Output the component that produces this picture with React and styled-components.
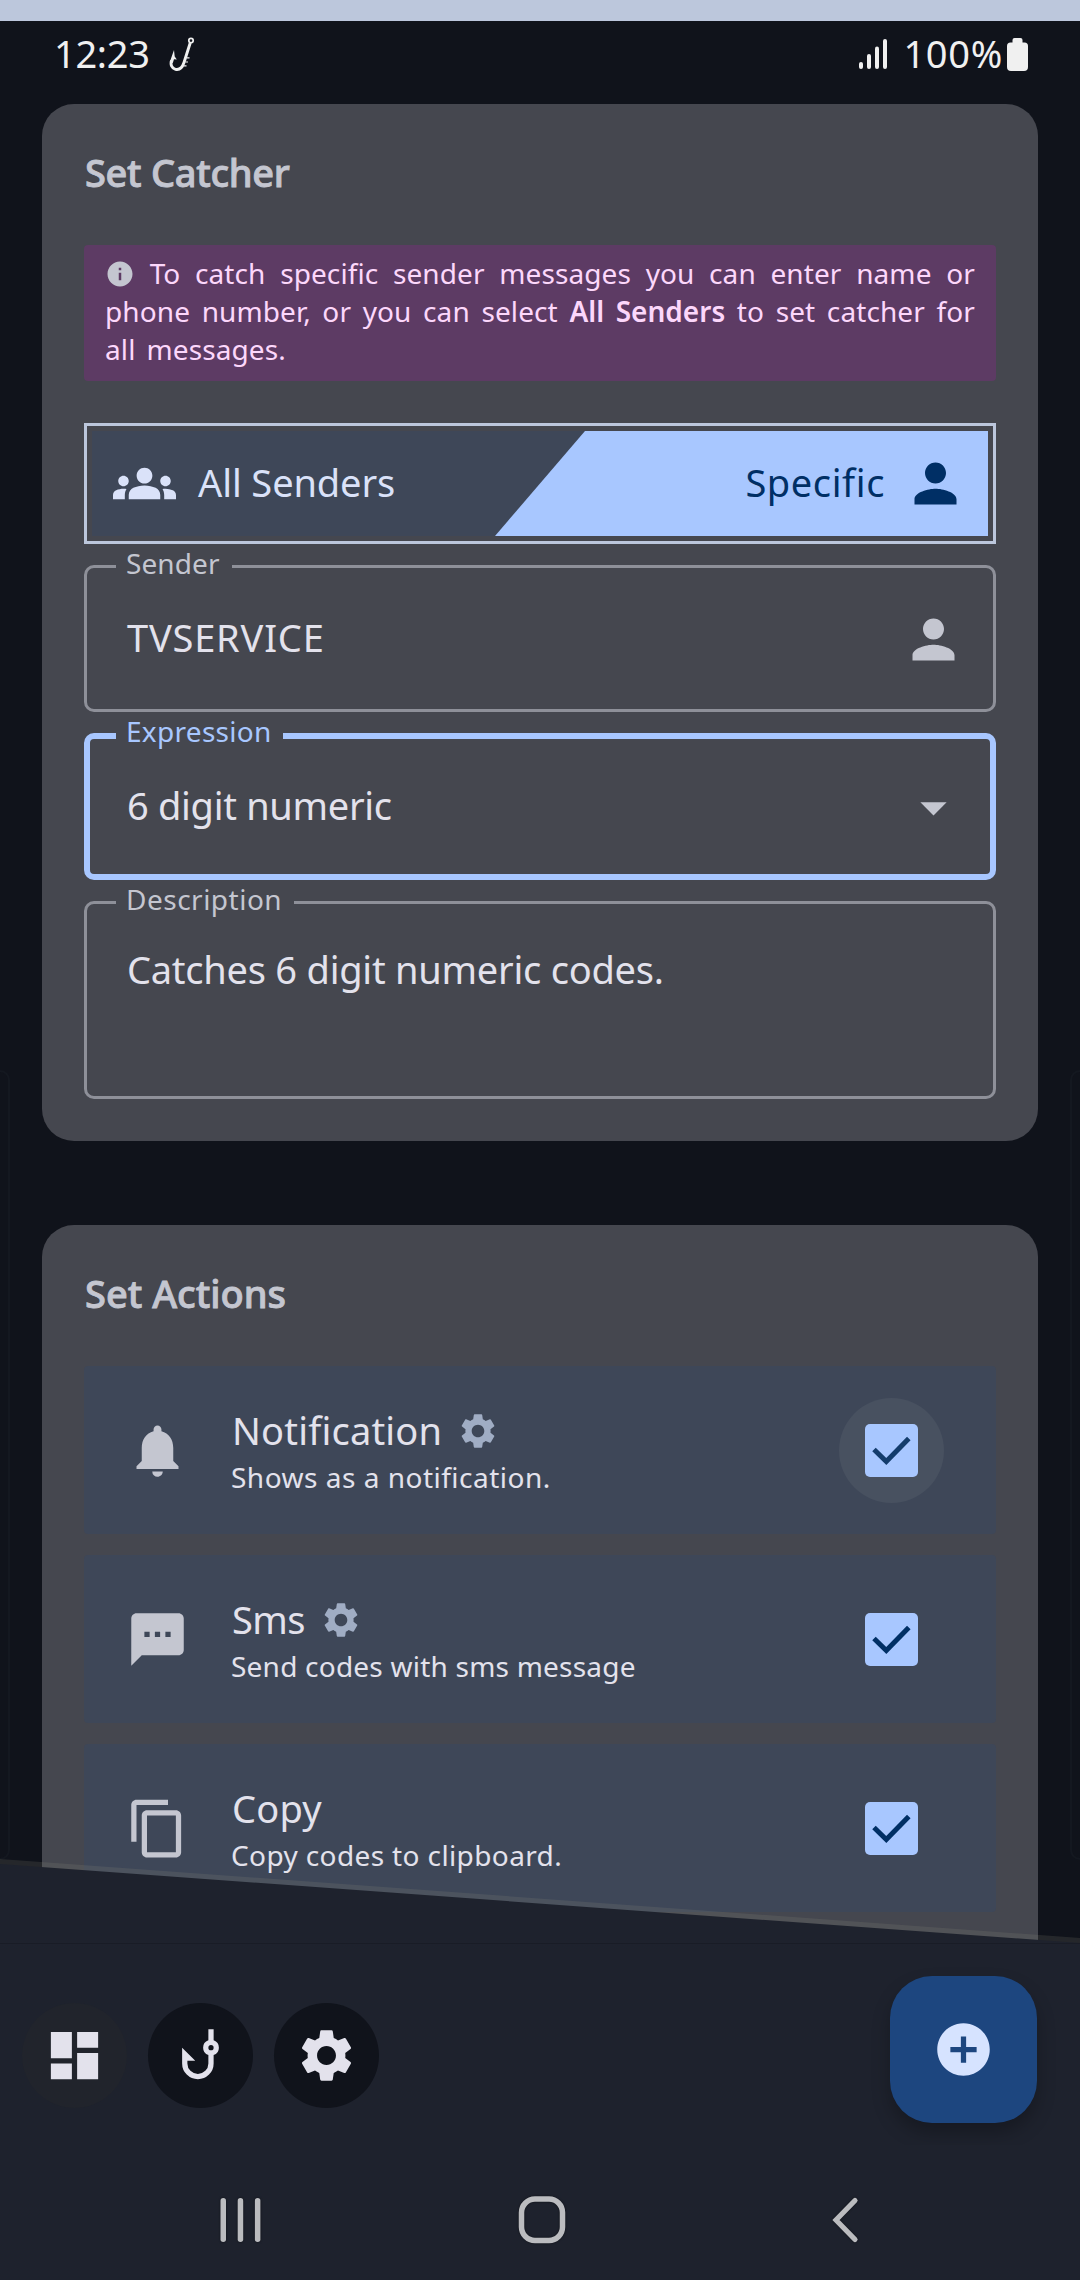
import React from "react";
import styled, { createGlobalStyle, css } from "styled-components";
import {
  MdAddCircle,
  MdArrowDropDown,
  MdContentCopy,
  MdDashboard,
  MdGroups,
  MdInfo,
  MdNotifications,
  MdPerson,
  MdSettings,
  MdSms,
} from "react-icons/md";

const GlobalStyle = createGlobalStyle`
  * { box-sizing: border-box; }
  body {
    margin: 0;
    background: #10131b;
    font-family: "Noto Sans", "Open Sans", sans-serif;
  }
  svg { display: block; flex: none; }
`;

const Screen = styled.div`
  position: relative;
  width: 1080px;
  height: 2280px;
  overflow: hidden;
  background: #10131b;
  display: flex;
  flex-direction: column;
`;

const TopStrip = styled.div`
  height: 21px;
  flex: none;
  background: #bcc7dc;
`;

const StatusBar = styled.header`
  height: 83px;
  flex: none;
  display: flex;
  justify-content: space-between;
  align-items: flex-start;
  padding: 7px 52px 0 54px;
  color: #f0f0f0;
`;

const StatusGroup = styled.div`
  display: flex;
  align-items: center;
  height: 52px;
`;

const StatusText = styled.span`
  font-size: 38px;
  line-height: 52px;
  white-space: nowrap;
  letter-spacing: ${(p) => p.$ls || 0}px;
  margin: -3px ${(p) => p.$mr || 0}px 0 ${(p) => p.$ml || 0}px;
`;

const Content = styled.main`
  flex: 1;
  min-height: 0;
  padding: 0 42px;
  display: flex;
  flex-direction: column;
  gap: 84px;
`;

const Card = styled.section`
  flex: none;
  height: ${(p) => p.$h}px;
  background: #45474f;
  border-radius: 32px;
  padding: 41px 42px 42px;
`;

const CardTitle = styled.h2`
  margin: 0 0 46px;
  padding-left: 1px;
  font-size: 38px;
  line-height: 54px;
  font-weight: 500;
  -webkit-text-stroke: 0.9px currentColor;
  letter-spacing: ${(p) => p.$ls}px;
  color: #c4c6d0;
  white-space: nowrap;
`;

const InfoBox = styled.div`
  height: 136px;
  padding: 9px 21px 0 21px;
  border-radius: 4px;
  background: #5d3b64;
  color: #fcd7fb;
  font-size: 28px;
  line-height: 38px;
  margin-bottom: 42px;
`;

const InfoLine = styled.div`
  display: flex;
  justify-content: ${(p) => (p.$start ? "flex-start" : "space-between")};
  gap: ${(p) => (p.$start ? "11px" : "0")};
  letter-spacing: 0.1px;
  white-space: nowrap;
  b { font-weight: 600; letter-spacing: 0; }
`;

const InfoIcon = styled(MdInfo)`
  width: 30px;
  height: 30px;
  margin-top: 5px;
  color: #c4c6d0;
`;

const Toggle = styled.div`
  height: 121px;
  border: 3px solid #bcc7dc;
  padding: 5px;
  display: grid;
  margin-bottom: 21px;
`;

const ToggleTrack = styled.div`
  display: flex;
  justify-content: space-between;
  align-items: center;
  padding: 0 21px;
  background: #3e4758;
  position: relative;
`;

const ToggleActive = styled.div`
  position: absolute;
  inset: 0 0 0 403px;
  background: #a8c7ff;
  clip-path: polygon(90px 0, 100% 0, 100% 100%, 0 100%);
`;

const ToggleOption = styled.div`
  position: relative;
  display: flex;
  align-items: center;
  gap: ${(p) => (p.$on ? 19 : 22)}px;
  font-size: 38px;
  line-height: 52px;
  letter-spacing: ${(p) => p.$ls}px;
  color: ${(p) => (p.$on ? "#002f65" : "#dae2f9")};
  white-space: nowrap;
  span { margin-top: -4px; }
`;

const Field = styled.fieldset`
  position: relative;
  min-width: 0;
  margin: 0 0 21px;
  height: ${(p) => p.$h}px;
  padding: 0;
  display: flex;
  justify-content: space-between;
  align-items: ${(p) => (p.$top ? "flex-start" : "center")};
  border-radius: 10px;
  --edge: ${(p) => (p.$active ? "#a8c7ff" : "#8e9099")};
  --w: ${(p) => (p.$active ? 6 : 3)}px;
  border: var(--w) solid var(--edge);
`;

const FieldLabel = styled.span`
  position: absolute;
  left: calc(32px - var(--w));
  top: calc(-22px - var(--w));
  width: ${(p) => p.$w}px;
  padding-left: 10px;
  background: linear-gradient(#45474f, #45474f) 0 18px / 100% 14px no-repeat;
  font-size: 28px;
  line-height: 40px;
  letter-spacing: ${(p) => p.$ls}px;
  color: ${(p) => (p.$active ? "#a8c7ff" : "#c4c6d0")};
  white-space: nowrap;
`;

const FieldValue = styled.span`
  font-size: 38px;
  line-height: 52px;
  letter-spacing: ${(p) => p.$ls}px;
  color: #e3e2ec;
  white-space: nowrap;
  padding-left: calc(43px - var(--w));
  margin-top: ${(p) => (p.$pt ? p.$pt : -4)}px;
`;

const FieldIcon = styled.span`
  width: 63px;
  height: 63px;
  margin: 2px calc(31px - var(--w)) 0 0;
  color: #c4c6d0;
`;

const ActionList = styled.div`
  display: flex;
  flex-direction: column;
  gap: 21px;
`;

const ActionRow = styled.div`
  height: 168px;
  display: flex;
  align-items: center;
  padding: 0 52px 0 42px;
  background: #3e4758;
  border-radius: 4px;
  color: #c4c6d0;
`;

const ActionText = styled.div`
  flex: 1;
  padding: 3px 0 0 42px;
  color: #e3e2ec;
`;

const ActionTitle = styled.div`
  display: flex;
  align-items: center;
  gap: 15px;
  padding-left: 1px;
  font-size: 38px;
  line-height: 50px;
  height: 50px;
  letter-spacing: ${(p) => p.$ls}px;
  white-space: nowrap;
  svg { color: #a0adc4; margin-top: 3px; }
`;

const ActionSub = styled.div`
  font-size: 28px;
  line-height: 44px;
  letter-spacing: ${(p) => p.$ls}px;
  white-space: nowrap;
`;

const CheckHalo = styled.span`
  width: 105px;
  height: 105px;
  border-radius: 50%;
  display: grid;
  place-items: center;
  background: ${(p) => (p.$pressed ? "#485160" : "transparent")};
`;

const CheckBox = styled.span`
  width: 53px;
  height: 53px;
  border-radius: 5px;
  display: grid;
  place-items: center;
  background: #a8c7ff;
`;

const edge = css`
  position: absolute;
  top: 1070px;
  height: 790px;
  width: 40px;
  border: 2px solid #141820;
  border-radius: 10px;
`;

const EdgeLeft = styled.div`
  ${edge}
  left: -30px;
`;

const EdgeRight = styled.div`
  ${edge}
  right: -30px;
`;

const BottomSheet = styled.footer`
  position: absolute;
  left: 0;
  right: 0;
  bottom: 0;
  height: 422px;
  display: flex;
  flex-direction: column;
`;

const SheetEdge = styled.div`
  height: 85px;
  flex: none;
  background: rgba(150, 150, 130, 0.16);
  clip-path: polygon(0 1px, 100% 80px, 100% 100%, 0 100%);
  display: grid;
`;

const SheetFill = styled.div`
  background: #1e222d;
  clip-path: polygon(0 6px, 100% 85px, 0 100%);
`;

const AppBar = styled.div`
  height: 202px;
  flex: none;
  border-top: 1px solid #191c26;
  background: #1e222d;
  display: flex;
  align-items: flex-start;
  gap: 21px;
  padding: 0 43px 0 22px;
`;

const RoundButton = styled.button`
  margin: 59px 0 0;
  width: 105px;
  height: 105px;
  padding: 0;
  border: 0;
  border-radius: 50%;
  display: grid;
  place-items: center;
  background: ${(p) => (p.$on ? "#21242c" : "#10131b")};
  color: #e3e2ec;
`;

const Fab = styled.button`
  margin: 32px 0 0 auto;
  width: 147px;
  height: 147px;
  padding: 0;
  border: 0;
  border-radius: 42px;
  display: grid;
  place-items: center;
  background: #1d467f;
  color: #d6e3ff;
  box-shadow: 0 10px 18px rgba(0, 0, 0, 0.25);
`;

const SystemNav = styled.nav`
  flex: 1;
  background: #1e222d;
  display: flex;
  justify-content: space-between;
  padding: 46px 215px 0 214px;
  svg { filter: drop-shadow(0 0 1px rgba(0, 0, 0, 0.5)); }
`;

const HookIcon = () => (
  <svg width="63" height="63" viewBox="0 0 24 24" fill="currentColor">
    <path d="M11 21A6 6 0 0 1 5 15V9L10 14H7V15A4 4 0 0 0 15 15V11.83A3 3 0 0 1 15 6.17V2H17V6.17A3 3 0 0 1 17 11.83V15A6 6 0 0 1 11 21M16 8A1 1 0 0 0 16 10A1 1 0 0 0 16 8Z" />
  </svg>
);

const FishHookIcon = () => (
  <svg width="26" height="35" viewBox="0 0 26 35" fill="none" stroke="currentColor">
    <circle cx="22" cy="3.6" r="2.200" strokeWidth="1.700" />
    <path d="M21.200 6 15 25.500C13 31.500 9.500 33 6.500 32.300 2.500 31.200 1.300 27.500 2.500 23.500" strokeWidth="2.900" />
    <path d="M0.800 25 5 13 5.700 19.500 7.800 22.500 5 22.300 3.800 26Z" fill="currentColor" stroke="none" />
    <path d="M18 20.800H20.500M16.500 25H19M15 28.800H17.500" strokeWidth="1.200" />
  </svg>
);

const SignalIcon = () => (
  <svg width="29" height="31" viewBox="0 0 29 31" fill="currentColor">
    <rect x="0" y="23" width="4" height="7" rx="2" />
    <rect x="8" y="15" width="4" height="15" rx="2" />
    <rect x="16" y="7.500" width="4" height="22.500" rx="2" />
    <rect x="24" y="0" width="4" height="30" rx="2" />
  </svg>
);

const BatteryIcon = () => (
  <svg width="21" height="33" viewBox="0 0 21 33" fill="currentColor">
    <path d="M7.500 0h6a2 2 0 0 1 2 2v2.500H17.500A3.500 3.500 0 0 1 21 8v21a4 4 0 0 1-4 4H4a4 4 0 0 1-4-4V8A3.500 3.500 0 0 1 3.500 4.500H5.500V2a2 2 0 0 1 2-2z" />
  </svg>
);

const CheckIcon = ({ color }) => (
  <svg width="53" height="53" viewBox="0 0 53 53" fill="none" stroke={color} strokeWidth="5">
    <path d="M9 25.500 21.300 37.500 43.800 14.500" />
  </svg>
);

const actions = [
  { icon: MdNotifications, title: "Notification", ls: 0.2, sub: "Shows as a notification.", subLs: 0.5, gear: true, pressed: true },
  { icon: MdSms, title: "Sms", ls: -0.6, sub: "Send codes with sms message", subLs: 0.22, gear: true },
  { icon: MdContentCopy, title: "Copy", ls: 0.2, sub: "Copy codes to clipboard.", subLs: 0.38 },
];

const Words = ({ text }) => text.split(" ").map((w) => <span key={w}>{w}</span>);

export default function App() {
  return (
    <>
      <GlobalStyle />
      <Screen>
        <TopStrip />
        <StatusBar>
          <StatusGroup>
            <StatusText $mr={19} $ls={-0.3}>12:23</StatusText>
            <FishHookIcon />
          </StatusGroup>
          <StatusGroup>
            <SignalIcon />
            <StatusText $mr={4} $ml={15} $ls={0.7}>100%</StatusText>
            <BatteryIcon />
          </StatusGroup>
        </StatusBar>

        <Content>
          <Card $h={1037}>
            <CardTitle $ls={-0.3}>Set Catcher</CardTitle>
            <InfoBox>
              <InfoLine>
                <InfoIcon />
                <Words text="To catch specific sender messages you can enter name or" />
              </InfoLine>
              <InfoLine>
                <Words text="phone number, or you can select" />
                <b>All</b>
                <b>Senders</b>
                <Words text="to set catcher for" />
              </InfoLine>
              <InfoLine $start>
                <Words text="all messages." />
              </InfoLine>
            </InfoBox>

            <Toggle>
              <ToggleTrack>
                <ToggleActive />
                <ToggleOption $ls={-0.1}>
                  <MdGroups size={63} />
                  <span>All Senders</span>
                </ToggleOption>
                <ToggleOption $on $ls={0.6}>
                  <span>Specific</span>
                  <MdPerson size={63} />
                </ToggleOption>
              </ToggleTrack>
            </Toggle>

            <Field $h={147}>
              <FieldLabel $w={116} $ls={0.1}>Sender</FieldLabel>
              <FieldValue $ls={0.8}>TVSERVICE</FieldValue>
              <FieldIcon><MdPerson size={63} /></FieldIcon>
            </Field>
            <Field $h={147} $active>
              <FieldLabel $w={167} $ls={0.3} $active>Expression</FieldLabel>
              <FieldValue $ls={-0.3}>6 digit numeric</FieldValue>
              <FieldIcon><MdArrowDropDown size={63} /></FieldIcon>
            </Field>
            <Field $h={198} $top>
              <FieldLabel $w={178} $ls={0.5}>Description</FieldLabel>
              <FieldValue $ls={-0.24} $pt={39}>Catches 6 digit numeric codes.</FieldValue>
            </Field>
          </Card>

          <Card $h={900}>
            <CardTitle $ls={0}>Set Actions</CardTitle>
            <ActionList>
              {actions.map(({ icon: Icon, title, ls, sub, subLs, gear, pressed }) => (
                <ActionRow key={title}>
                  <Icon size={63} />
                  <ActionText>
                    <ActionTitle $ls={ls}>
                      {title}
                      {gear && <MdSettings size={42} />}
                    </ActionTitle>
                    <ActionSub $ls={subLs}>{sub}</ActionSub>
                  </ActionText>
                  <CheckHalo $pressed={pressed}>
                    <CheckBox>
                      <CheckIcon color={pressed ? "#133c6c" : "#002f65"} />
                    </CheckBox>
                  </CheckHalo>
                </ActionRow>
              ))}
            </ActionList>
          </Card>
        </Content>

        <EdgeLeft />
        <EdgeRight />

        <BottomSheet>
          <SheetEdge>
            <SheetFill />
          </SheetEdge>
          <AppBar>
            <RoundButton $on><MdDashboard size={63} /></RoundButton>
            <RoundButton><HookIcon /></RoundButton>
            <RoundButton><MdSettings size={63} /></RoundButton>
            <Fab><MdAddCircle size={63} /></Fab>
          </AppBar>
          <SystemNav>
            <svg width="53" height="60" viewBox="0 0 53 60" fill="#bbbcbf">
              <rect x="6.500" y="7" width="5.500" height="44" rx="2.700" />
              <rect x="23.700" y="7" width="5.500" height="44" rx="2.700" />
              <rect x="40.900" y="7" width="5.500" height="44" rx="2.700" />
            </svg>
            <svg width="60" height="60" viewBox="0 0 60 60" fill="none" stroke="#bbbcbf" strokeWidth="5.500">
              <rect x="5.500" y="8" width="41" height="41.500" rx="13.500" />
            </svg>
            <svg width="40" height="60" viewBox="0 0 40 60" fill="none" stroke="#bbbcbf" strokeWidth="5.200" strokeLinecap="round">
              <path d="M30 9.500 11 29 30 48.500" />
            </svg>
          </SystemNav>
        </BottomSheet>
      </Screen>
    </>
  );
}
